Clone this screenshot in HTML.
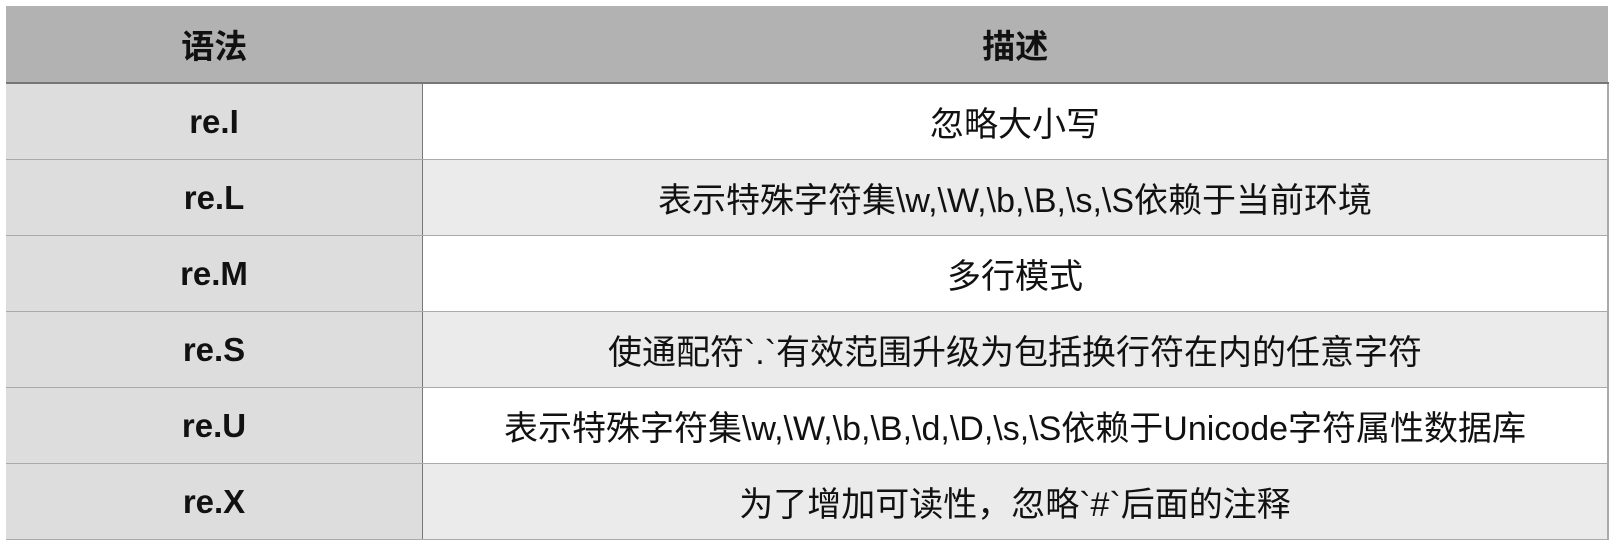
<!DOCTYPE html>
<html><head><meta charset="utf-8"><style>
body{margin:0;background:#fff;width:1616px;height:544px;overflow:hidden}
table{position:absolute;left:6px;top:6px;width:1603px;border-collapse:collapse;font-family:"Liberation Sans","Noto Sans CJK SC",sans-serif;font-size:34px;color:#111}
td,th{text-align:center;padding:0;border-bottom:1px solid #aaa}
th{background:#b1b2b1;height:76px;font-weight:bold;border-bottom:2px solid #777;font-size:33px}
td{height:75px}
td.k{background:#dcdddc;font-weight:bold;width:416px;border-right:1px solid #777;font-size:33px}
tr.a td.v{background:#ebebeb}
td.v{border-right:2px solid #aaa}
</style></head><body>
<table>
<tr><th>语法</th><th>描述</th></tr>
<tr><td class="k">re.I</td><td class="v">忽略大小写</td></tr>
<tr class="a"><td class="k">re.L</td><td class="v">表示特殊字符集\w,\W,\b,\B,\s,\S依赖于当前环境</td></tr>
<tr><td class="k">re.M</td><td class="v">多行模式</td></tr>
<tr class="a"><td class="k">re.S</td><td class="v">使通配符`.`有效范围升级为包括换行符在内的任意字符</td></tr>
<tr><td class="k">re.U</td><td class="v">表示特殊字符集\w,\W,\b,\B,\d,\D,\s,\S依赖于Unicode字符属性数据库</td></tr>
<tr class="a"><td class="k">re.X</td><td class="v">为了增加可读性，忽略`#`后面的注释</td></tr>
</table>
</body></html>
